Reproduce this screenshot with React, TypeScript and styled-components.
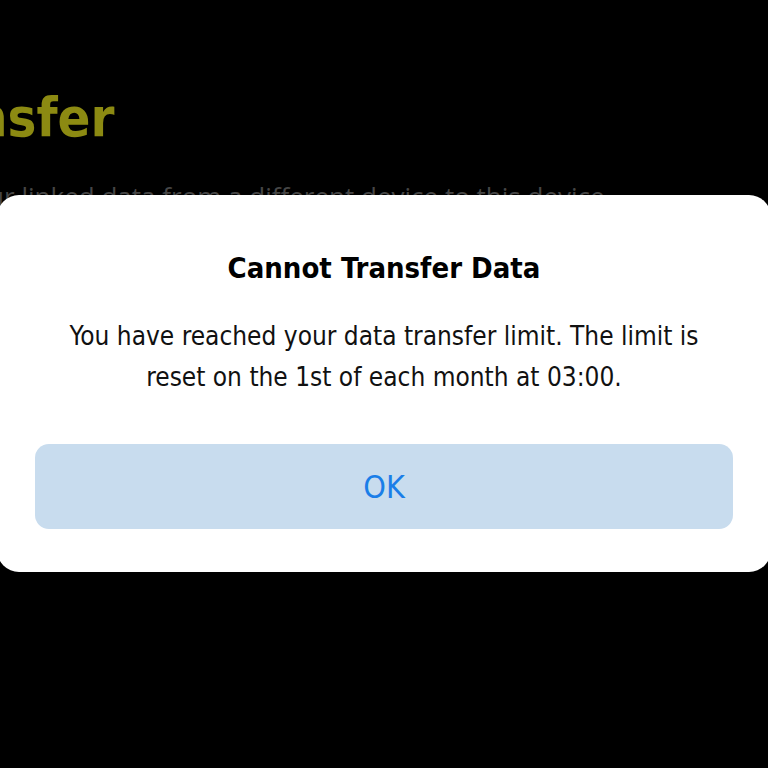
import React from 'react'
import styled, { createGlobalStyle } from 'styled-components'

const GlobalStyle = createGlobalStyle`
  html, body {
    margin: 0;
    padding: 0;
    background: #000;
  }
  body {
    width: 768px;
    height: 768px;
    overflow: hidden;
    font-family: "DejaVu Sans Condensed", "DejaVu Sans", sans-serif;
  }
`

function App() {
  return (
    <>
      <GlobalStyle />
      <Page>
        <Backdrop>
          <Heading>Data Transfer</Heading>
          <Subtitle>Transfer your linked data from a different device to this device.</Subtitle>
        </Backdrop>
        <Overlay>
          <Dialog>
            <Title>Cannot Transfer Data</Title>
            <Message>
              You have reached your data transfer limit. The limit is
              <br />
              reset on the 1st of each month at 03:00.
            </Message>
            <OkButton>OK</OkButton>
          </Dialog>
        </Overlay>
      </Page>
    </>
  )
}

export default App

const Page = styled.div`
  position: relative;
  width: 768px;
  height: 768px;
  background: #000;
  overflow: hidden;
`

// the page behind the dialog is scrolled off to the left
const Backdrop = styled.div`
  display: flex;
  flex-direction: column;
  padding-top: 88px;
  margin-left: -257px;
  gap: 32px;
`

const Heading = styled.h1`
  margin: 0;
  font-size: 54px;
  line-height: 60px;
  font-weight: bold;
  color: #8c8a12;
  white-space: nowrap;
`

const Subtitle = styled.p`
  margin: 0 0 0 108px;
  font-family: "Open Sans", sans-serif;
  font-size: 26px;
  line-height: 32px;
  color: #464646;
  white-space: nowrap;
`

const Overlay = styled.div`
  position: absolute;
  inset: 0;
  display: flex;
  justify-content: center;
  padding-top: 195px;
`

const Dialog = styled.div`
  flex: none;
  width: 698px;
  padding: 53px 38px 43px;
  background: #fff;
  border-radius: 22px;
  display: flex;
  flex-direction: column;
  align-items: center;
  height: fit-content;
`

const Title = styled.h2`
  margin: 0;
  font-size: 29px;
  line-height: 40px;
  font-weight: bold;
  color: #000;
`

const Message = styled.p`
  margin: 28px 0 0;
  font-size: 26px;
  line-height: 41px;
  color: #111;
  text-align: center;
`

const OkButton = styled.button`
  margin-top: 46px;
  width: 100%;
  height: 85px;
  border: none;
  border-radius: 14px;
  background: #c8dcee;
  color: #1a7ee8;
  font-family: inherit;
  font-size: 32px;
  cursor: pointer;
`
